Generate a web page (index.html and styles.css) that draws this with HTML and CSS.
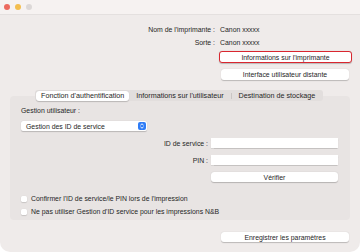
FILE: index.html
```html
<!DOCTYPE html>
<html lang="fr">
    <head>
        <meta charset="UTF-8">
        <title>Informations sur l'imprimante</title>
        <link rel="stylesheet" href="styles.css">
    </head>
<body>

<div class="window">
    <div class="titlebar">
        <span class="light red"></span>
        <span class="light yellow"></span>
        <span class="light gray"></span>
    </div>

    <div class="info">
        <div class="info-row">
            <span class="info-label">Nom de l'imprimante :</span>
            <span class="info-value">Canon xxxxx</span>
        </div>
        <div class="info-row">
            <span class="info-label">Sorte :</span>
            <span class="info-value">Canon xxxxx</span>
        </div>
        <button class="btn btn-focus">Informations sur l'imprimante</button>
        <button class="btn btn-remote">Interface utilisateur distante</button>
    </div>

    <div class="tabbox">
        <div class="tabs">
            <span class="tab active">Fonction d'authentification</span>
            <span class="tab">Informations sur l'utilisateur</span>
            <span class="tab-sep"></span>
            <span class="tab">Destination de stockage</span>
        </div>
        <div class="panel">
            <div class="section-label">Gestion utilisateur :</div>
            <div class="popup">
                <span>Gestion des ID de service</span>
                <span class="popup-arrow">
                    <svg width="8" height="8" viewBox="0 0 8 8">
                        <path d="M2.4 3.2 L4 1.8 L5.6 3.2 M2.4 4.8 L4 6.2 L5.6 4.8" fill="none" stroke="#fff" stroke-width="0.9"/>
                    </svg>
                </span>
            </div>
            <div class="field-row">
                <label class="field-label">ID de service :</label>
                <input type="text" class="field">
            </div>
            <div class="field-row">
                <label class="field-label">PIN :</label>
                <input type="password" class="field">
            </div>
            <button class="btn btn-verify">Vérifier</button>
            <div class="check-row first">
                <span class="checkbox"></span>
                <span>Confirmer l'ID de service/le PIN lors de l'impression</span>
            </div>
            <div class="check-row">
                <span class="checkbox"></span>
                <span>Ne pas utiliser Gestion d'ID service pour les impressions N&amp;B</span>
            </div>
        </div>
    </div>

    <button class="btn btn-save">Enregistrer les paramètres</button>
</div>

</body>
</html>
```

FILE: styles.css
```css
body {
    margin: 0;
    background-color: #ffffff;
    font-family: "Liberation Sans", Arial, sans-serif;
    font-size: 6.9px;
    color: #262626;
}
.window {
    width: 360px;
    height: 252px;
    background-color: #efebea;
    border-radius: 0 0 10px 10px;
    overflow: hidden;
}
.titlebar {
    height: 15px;
    background-color: #f6f2f1;
    border-bottom: 1px solid #e4e0df;
    box-sizing: border-box;
    display: flex;
    align-items: center;
    gap: 5px;
    padding-left: 4px;
}
.light {
    width: 6px;
    height: 6px;
    border-radius: 50%;
}
.red { background-color: #ec6a5f; }
.yellow { background-color: #f3be4f; }
.gray { background-color: #dcd8d7; }

.info {
    padding-top: 8px;
}
.info-row {
    display: flex;
    gap: 5px;
    height: 13px;
    align-items: center;
}
.info-label {
    width: 215px;
    text-align: right;
}
.btn {
    display: block;
    background-color: #ffffff;
    border: none;
    border-radius: 3px;
    box-shadow: 0 0.5px 1px rgba(0, 0, 0, 0.22);
    font-family: inherit;
    font-size: 6.9px;
    color: #262626;
    padding: 0;
    text-align: center;
}
.btn-focus {
    margin: 2px 0 0 219px;
    width: 133px;
    height: 12px;
    border: 1.3px solid #d9262f;
    box-sizing: border-box;
}
.btn-remote {
    margin: 6px 0 0 221px;
    width: 128px;
    height: 11px;
}

.tabbox {
    position: relative;
    margin: 10px 10px 0 10px;
    padding-top: 6px;
}
.tabs {
    position: absolute;
    top: 0;
    left: 25px;
    display: flex;
    align-items: center;
    height: 11px;
    padding: 0 1px;
    background-color: #e2dedd;
    border-radius: 3px;
    font-size: 7.2px;
}
.tab {
    padding: 0 7px;
    line-height: 11px;
}
.tab.active {
    background-color: #ffffff;
    border-radius: 3px;
    box-shadow: 0 0.5px 1px rgba(0, 0, 0, 0.2);
    height: 10px;
    line-height: 10px;
    padding: 0 5px;
}
.tab-sep {
    width: 1px;
    height: 6px;
    background-color: #c9c5c4;
}
.panel {
    height: 124px;
    background-color: #e8e4e3;
    border-radius: 4px;
    padding: 10px 11px 0 11px;
    box-sizing: border-box;
}
.section-label {
    line-height: 9px;
}
.popup {
    margin-top: 6px;
    width: 126px;
    height: 10px;
    background-color: #ffffff;
    border-radius: 2px;
    box-shadow: 0 0.5px 1px rgba(0, 0, 0, 0.2);
    display: flex;
    align-items: center;
    justify-content: space-between;
    padding: 0 1px 0 5px;
    box-sizing: border-box;
}
.popup-arrow {
    width: 8px;
    height: 8px;
    background-color: #2f7cf6;
    border-radius: 2px;
    display: flex;
}
.field-row {
    display: flex;
    align-items: center;
    gap: 3px;
    margin-top: 7px;
}
.field-label {
    width: 187px;
    text-align: right;
}
.field {
    width: 127px;
    height: 10px;
    border: none;
    background-color: #ffffff;
    box-shadow: 0 0.5px 1px rgba(0, 0, 0, 0.15);
    padding: 0;
    box-sizing: border-box;
}
.btn-verify {
    margin: 7px 0 0 190px;
    width: 127px;
    height: 10px;
}
.check-row {
    display: flex;
    align-items: center;
    gap: 4px;
    margin-top: 4px;
    line-height: 9px;
}
.check-row.first {
    margin-top: 12px;
}
.checkbox {
    width: 6px;
    height: 6px;
    background-color: #ffffff;
    border-radius: 1.5px;
    box-shadow: 0 0.5px 1px rgba(0, 0, 0, 0.25);
}
.btn-save {
    margin: 12px 0 0 221px;
    width: 128px;
    height: 10px;
}
```
